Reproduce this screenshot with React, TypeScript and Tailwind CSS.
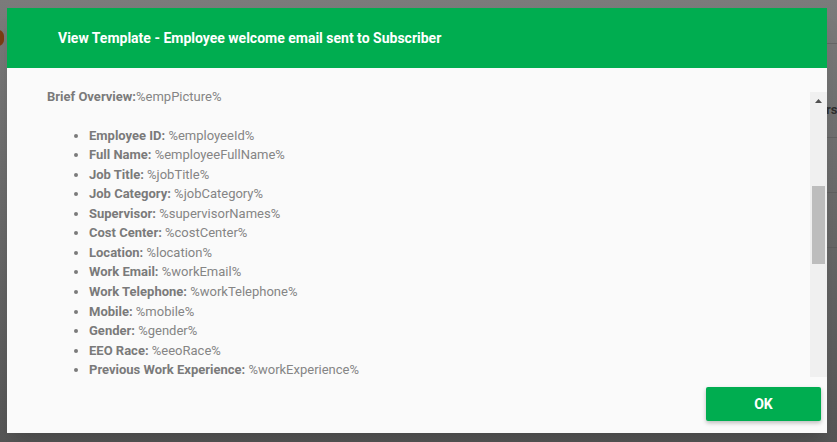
const fields: [string, string][] = [
  ["Employee ID:", "%employeeId%"],
  ["Full Name:", "%employeeFullName%"],
  ["Job Title:", "%jobTitle%"],
  ["Job Category:", "%jobCategory%"],
  ["Supervisor:", "%supervisorNames%"],
  ["Cost Center:", "%costCenter%"],
  ["Location:", "%location%"],
  ["Work Email:", "%workEmail%"],
  ["Work Telephone:", "%workTelephone%"],
  ["Mobile:", "%mobile%"],
  ["Gender:", "%gender%"],
  ["EEO Race:", "%eeoRace%"],
  ["Previous Work Experience:", "%workExperience%"],
];

export default function App() {
  return (
    <div
      className="relative w-[837px] h-[442px] overflow-hidden bg-gradient-to-b from-[#7b7b7b] to-[#565656]"
      style={{ fontFamily: "Roboto, 'Liberation Sans', sans-serif" }}
    >
      {/* page behind the overlay */}
      <div className="absolute left-[-8px] top-[30px] w-[12px] h-[16px] rounded-full bg-[#7a3d12]" />
      <div className="absolute left-[827px] top-[43px] w-[20px] h-px bg-[#666]" />
      <div className="absolute left-[826px] top-[100px] text-[13px] font-bold text-[#2e2e2e]">rs</div>
      <div className="absolute left-[827px] top-[137px] w-[20px] h-px bg-[#626262]" />
      <div className="absolute left-[827px] top-[192px] w-[20px] h-px bg-[#606060]" />
      <div className="absolute left-[827px] top-[247px] w-[20px] h-px bg-[#5e5e5e]" />

      {/* modal */}
      <div className="absolute left-[7px] top-[8px] w-[820px] h-[425px] bg-[#fafafa] shadow-xl flex flex-col">
        <div className="h-[60px] bg-[#00ad50] flex items-center pl-[51px]">
          <h2 className="text-white font-bold text-[14px]">
            View Template - Employee welcome email sent to Subscriber
          </h2>
        </div>

        <div className="flex h-[309px]">
          <div className="flex-1 overflow-hidden pl-[40px] pt-[19px] text-[13px] leading-[19.6px] text-[#7a7a7a]">
            <p>
              <span className="font-bold">Brief Overview:</span>
              <span className="text-[#858585]">%empPicture%</span>
            </p>
            <ul className="list-disc pl-[42px] mt-[19px] leading-[19.55px]">
              {fields.map(([label, value]) => (
                <li key={label}>
                  <span className="font-bold">{label}</span>{" "}
                  <span className="text-[#858585]">{value}</span>
                </li>
              ))}
            </ul>
          </div>

          <div className="w-[17px] mt-[24px] h-[285px] bg-[#f0f0f0] flex flex-col items-center">
            <svg width="9" height="6" viewBox="0 0 9 6" className="mt-[6px]">
              <path d="M4.5 1 L8 5 L1 5 Z" fill="#505050" />
            </svg>
            <div className="mt-[82px] w-[13px] h-[78px] bg-[#bdbdbd]" />
          </div>
        </div>

        <div className="flex justify-end pr-[6px] pt-[10px]">
          <button className="w-[115px] h-[34px] rounded-[2px] bg-[#00ad50] text-white font-bold text-[14px] shadow-[0_2px_4px_rgba(0,0,0,0.25)]">
            OK
          </button>
        </div>
      </div>
    </div>
  );
}
